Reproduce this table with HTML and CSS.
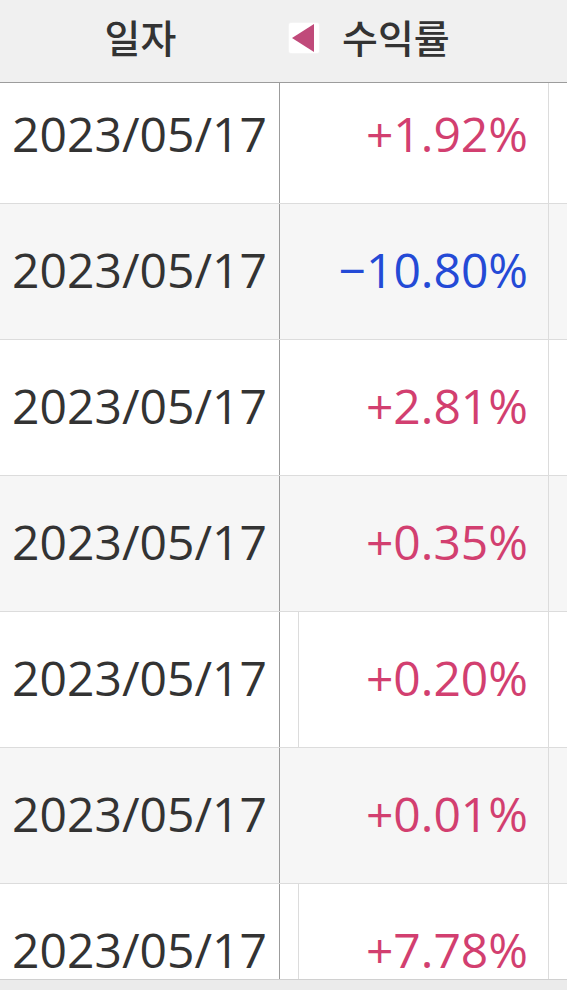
FILE: index.html
```html
<!DOCTYPE html>
<html lang="ko">
<head>
<meta charset="utf-8">
<title>수익률</title>
<link rel="stylesheet" href="styles.css">
</head>
<body>
<div class="table">
  <div class="head">
    <div class="hcell hdate">일자</div>
    <div class="hcell hret">
      <span class="sort"><svg width="22" height="28" viewBox="0 0 22 28"><polygon points="0,14 22,0 22,28" fill="#c04a7a"/></svg></span>
      <span class="hlabel">수익률</span>
    </div>
    <div class="hcell"></div>
  </div>
  <div class="viewport">
    <div class="rows">
      <div class="row"><div class="date">2023/05/17</div><div class="val"><span class="gut"></span><span class="num up">+1.92%</span></div><div class="rest"></div></div>
      <div class="row alt"><div class="date">2023/05/17</div><div class="val"><span class="gut"></span><span class="num down">−10.80%</span></div><div class="rest"></div></div>
      <div class="row"><div class="date">2023/05/17</div><div class="val"><span class="gut"></span><span class="num up">+2.81%</span></div><div class="rest"></div></div>
      <div class="row alt"><div class="date">2023/05/17</div><div class="val"><span class="gut"></span><span class="num up">+0.35%</span></div><div class="rest"></div></div>
      <div class="row split"><div class="date">2023/05/17</div><div class="val"><span class="gut"></span><span class="num up">+0.20%</span></div><div class="rest"></div></div>
      <div class="row alt"><div class="date">2023/05/17</div><div class="val"><span class="gut"></span><span class="num up">+0.01%</span></div><div class="rest"></div></div>
      <div class="row split"><div class="date">2023/05/17</div><div class="val"><span class="gut"></span><span class="num up">+7.78%</span></div><div class="rest"></div></div>
    </div>
  </div>
</div>
</body>
</html>
```

FILE: styles.css
```css
html, body {
  margin: 0;
  padding: 0;
  background: #ebebeb;
}
body {
  width: 567px;
  height: 990px;
  overflow: hidden;
  font-family: "Open Sans", "Noto Sans CJK KR", sans-serif;
  color: #333;
}
.table {
  display: flex;
  flex-direction: column;
}
.head {
  display: grid;
  grid-template-columns: 279px 269px 1fr;
  height: 82px;
  background: #f0f0f0;
  border-bottom: 1px solid #9c9c9c;
  font-family: "Noto Sans CJK KR", sans-serif;
  font-weight: 500;
  font-size: 39px;
  line-height: 1;
  color: #333;
}
.hcell {
  display: flex;
  align-items: center;
  padding-bottom: 10px;
}
.hdate {
  justify-content: center;
  padding-left: 2px;
}
.hret {
  padding-left: 10px;
  gap: 23px;
}
.sort {
  width: 30px;
  height: 30px;
  background: #fff;
  border-radius: 2px;
  box-shadow: 0 0 2px #fff;
  display: flex;
  align-items: center;
  justify-content: flex-end;
  box-sizing: border-box;
  padding-right: 5px;
  margin-top: 4px;
}
.sort svg { display: block; }
.viewport {
  height: 896px;
  overflow: hidden;
  background: #fff;
  border-bottom: 1px solid #d0d0d0;
}
.rows {
  margin-top: -15px;
}
.row {
  display: grid;
  grid-template-columns: 280px 269px 1fr;
  height: 136px;
  box-sizing: border-box;
  border-bottom: 1px solid #dcdcdc;
  background: #fff;
}
.row.alt {
  background: #f6f6f6;
}
.date {
  border-right: 1px solid #9c9c9c;
  display: flex;
  align-items: center;
  justify-content: center;
  font-size: 48px;
  line-height: 1;
  color: #333;
  padding-bottom: 3px;
}
.val {
  border-right: 1px solid #dcdcdc;
  display: grid;
  grid-template-columns: 19px 1fr;
}
.gut {
  display: block;
}
.split .gut {
  border-right: 1px solid #dcdcdc;
}
.num {
  display: flex;
  align-items: center;
  justify-content: flex-end;
  padding-right: 20px;
  font-size: 48px;
  line-height: 1;
  padding-bottom: 3px;
}
.up { color: #d23f70; }
.down { color: #244ad6; }
```
